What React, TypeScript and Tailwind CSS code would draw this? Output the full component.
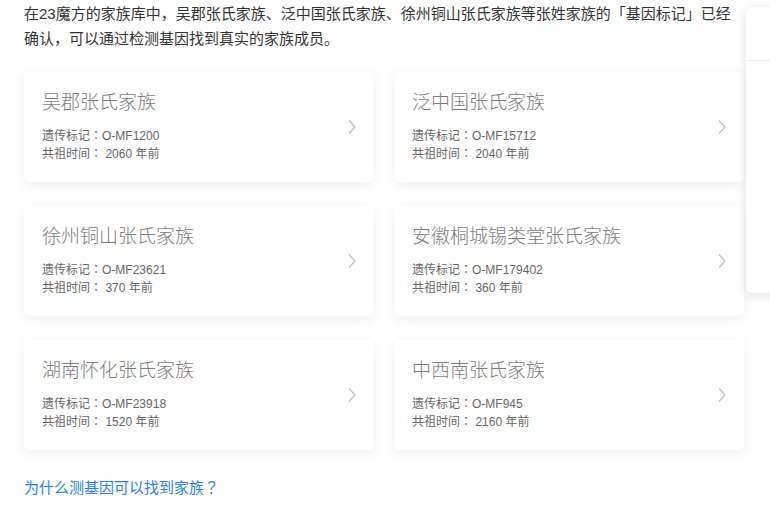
import React from "react";

const families = [
  { name: "吴郡张氏家族", code: "O-MF1200", time: "2060" },
  { name: "泛中国张氏家族", code: "O-MF15712", time: "2040" },
  { name: "徐州铜山张氏家族", code: "O-MF23621", time: "370" },
  { name: "安徽桐城锡类堂张氏家族", code: "O-MF179402", time: "360" },
  { name: "湖南怀化张氏家族", code: "O-MF23918", time: "1520" },
  { name: "中西南张氏家族", code: "O-MF945", time: "2160" },
];

const punct = { fontFamily: '"Noto Sans CJK TC", sans-serif' };

function Chevron() {
  return (
    <svg width="10" height="16" viewBox="0 0 10 16" fill="none" className="shrink-0">
      <path d="M2 1.5 L8 8 L2 14.5" stroke="#c4c4c4" strokeWidth="1.4" />
    </svg>
  );
}

export default function App() {
  return (
    <div
      className="relative w-[770px] h-[511px] overflow-hidden bg-white"
      style={{ fontFamily: '"Liberation Sans", "Noto Sans CJK SC", sans-serif' }}
    >
      <div className="px-6 pt-px">
        <p className="text-[15px] leading-[25px] text-[#333] w-[720px]">
          在23魔方的家族库中，吴郡张氏家族、泛中国张氏家族、徐州铜山张氏家族等张姓家族的「基因标记」已经确认，可以通过检测基因找到真实的家族成员。
        </p>
        <div className="mt-[21px] grid grid-cols-[350px_350px] gap-x-5 gap-y-6">
          {families.map((f) => (
            <div
              key={f.name}
              className="h-[110px] rounded-md bg-white shadow-[0_3px_14px_rgba(0,0,0,0.07)] pl-[18px] pr-[17px] pt-[18px] flex justify-between items-start"
            >
              <div>
                <div className="text-[19px] leading-[26px] font-light text-[#7c7c7c]">{f.name}</div>
                <div className="mt-[10px] text-[12px] leading-[18px] text-[#666]">
                  <div className="h-[18px]">
                    遗传标记<span style={punct}>：</span>
                    {f.code}
                  </div>
                  <div className="h-[18px]">
                    共祖时间<span style={punct}>：</span> {f.time} 年前
                  </div>
                </div>
              </div>
              <div className="self-center -mt-[19px]">
                <Chevron />
              </div>
            </div>
          ))}
        </div>
        <div className="mt-[27px] text-[15px] leading-[20px] text-[#2f7fe0]">
          为什么测基因可以找到家族<span style={punct}>？</span>
        </div>
      </div>
      <div className="absolute left-[746px] top-[7px] w-[60px] h-[286px] rounded-md bg-white shadow-[0_2px_12px_rgba(0,0,0,0.12)]">
        <div className="mt-[53px] border-t border-[#eeeeee]" />
      </div>
    </div>
  );
}
